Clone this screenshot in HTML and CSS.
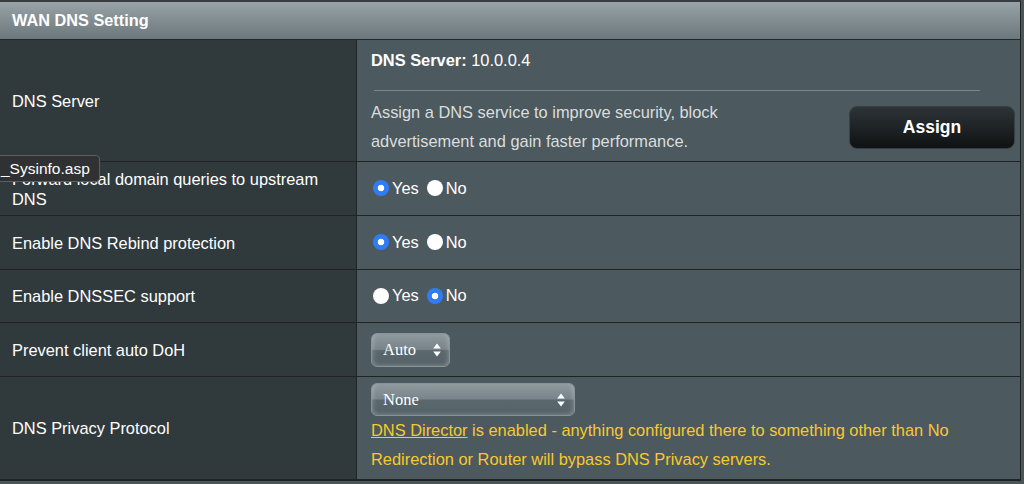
FILE: index.html
```html
<!DOCTYPE html>
<html lang="en">
<head>
<meta charset="utf-8">
<title>WAN DNS Setting</title>
<link rel="stylesheet" href="styles.css">
</head>
<body>
<div class="panel">
  <div class="panel-head">WAN DNS Setting</div>
  <div class="form">
    <div class="label">DNS Server</div>
    <div class="field server">
      <div class="server-line"><b>DNS Server:</b> 10.0.0.4</div>
      <div class="rule"></div>
      <div class="assign">
        <div class="assign-text">Assign a DNS service to improve security, block advertisement and gain faster performance.</div>
        <button class="btn-assign" type="button">Assign</button>
      </div>
    </div>

    <div class="label">Forward local domain queries to upstream DNS</div>
    <div class="field">
      <label class="opt"><input type="radio" name="fwd" checked><span>Yes</span></label>
      <label class="opt"><input type="radio" name="fwd"><span>No</span></label>
    </div>

    <div class="label">Enable DNS Rebind protection</div>
    <div class="field">
      <label class="opt"><input type="radio" name="rebind" checked><span>Yes</span></label>
      <label class="opt"><input type="radio" name="rebind"><span>No</span></label>
    </div>

    <div class="label">Enable DNSSEC support</div>
    <div class="field">
      <label class="opt"><input type="radio" name="dnssec"><span>Yes</span></label>
      <label class="opt"><input type="radio" name="dnssec" checked><span>No</span></label>
    </div>

    <div class="label">Prevent client auto DoH</div>
    <div class="field">
      <span class="sel sel-auto">
        <select><option>Auto</option></select>
        <svg class="arrows" width="8" height="14" viewBox="0 0 8 14"><path d="M4 0.5 L7.8 5.5 H0.2 Z M0.2 8.5 H7.8 L4 13.5 Z" fill="#fff"/></svg>
      </span>
    </div>

    <div class="label">DNS Privacy Protocol</div>
    <div class="field privacy">
      <span class="sel sel-none">
        <select><option>None</option></select>
        <svg class="arrows" width="8" height="14" viewBox="0 0 8 14"><path d="M4 0.5 L7.8 5.5 H0.2 Z M0.2 8.5 H7.8 L4 13.5 Z" fill="#fff"/></svg>
      </span>
      <div class="note"><a href="#">DNS Director</a> is enabled - anything configured there to something other than No Redirection or Router will bypass DNS Privacy servers.</div>
    </div>
  </div>
</div>
<div class="tip">_Sysinfo.asp</div>
</body>
</html>
```

FILE: styles.css
```css
* { box-sizing: border-box; }

html, body { margin: 0; }

body {
  position: relative;
  width: 1024px;
  height: 484px;
  overflow: hidden;
  background: #4b5659;
  color: #fff;
  font-family: "Liberation Sans", Arial, sans-serif;
  font-size: 16.4px;
}

.panel {
  width: 1021px;
  border-top: 2px solid #363c3f;
  border-right: 1px solid #1f2325;
  border-bottom: 2px solid #1f2325;
  background: #1f2325;
}

.panel-head {
  height: 38px;
  display: flex;
  align-items: center;
  padding-left: 12px;
  border-bottom: 1px solid #23282a;
  background: linear-gradient(#97a3a7, #6c777b);
  font-size: 16.3px;
  font-weight: bold;
}

.form {
  display: grid;
  grid-template-columns: 356px 1fr;
  grid-template-rows: 121px 53px 53px 52px 53px 102px;
  gap: 1px;
  background: #1f2325;
}

.label {
  display: flex;
  align-items: center;
  padding: 0 12px;
  background: #303a3d;
  line-height: 20px;
}

.field {
  display: flex;
  align-items: center;
  padding: 0 5px 0 14px;
  background: #4c595e;
}

/* DNS server cell */
.server {
  flex-direction: column;
  align-items: stretch;
  padding-top: 10px;
}

.server-line { line-height: 20px; }

.rule {
  height: 1px;
  margin: 20px 35px 0 3px;
  background: #7a868a;
}

.assign {
  display: flex;
  align-items: center;
  justify-content: space-between;
  margin-top: 7px;
}

.assign-text {
  width: 420px;
  line-height: 29px;
  color: #dadedf;
}

.btn-assign {
  width: 166px;
  height: 43px;
  border: 1px solid #394043;
  border-radius: 8px;
  background: linear-gradient(#2d3437, #0f1213);
  color: #fff;
  font-family: "Liberation Sans", Arial, sans-serif;
  font-size: 17.5px;
  font-weight: bold;
}

/* radios */
.opt {
  display: flex;
  align-items: center;
  margin-top: -1px;
}

.opt + .opt { margin-left: 6px; }

.opt input {
  appearance: none;
  -webkit-appearance: none;
  width: 16px;
  height: 16px;
  margin: 0 3px 0 2px;
  border-radius: 50%;
  background: #fff;
}

.opt input:checked {
  background: radial-gradient(circle, #fff 0 3px, #2f7cf5 3.6px);
}

/* selects */
.sel {
  position: relative;
  display: inline-flex;
}

.sel select {
  appearance: none;
  -webkit-appearance: none;
  height: 34px;
  padding: 0 0 0 11px;
  border: 1px solid #899498;
  border-radius: 6px;
  background: linear-gradient(#8f9a9e 0%, #78848a 48%, #5a676c 52%, #56636a 100%);
  box-shadow: inset 0 -2px 3px rgba(255, 255, 255, 0.12),
              inset 5px 0 4px -3px rgba(255, 255, 255, 0.15),
              inset -5px 0 4px -3px rgba(255, 255, 255, 0.15);
  color: #fff;
  font-family: "Liberation Serif", "Times New Roman", serif;
  font-size: 16.5px;
}

.sel-auto select { width: 79px; }
.sel-none select { width: 204px; height: 33px; }

.arrows {
  position: absolute;
  right: 9px;
  top: 10px;
  pointer-events: none;
}

.sel-none .arrows { right: 10px; }

/* privacy */
.privacy {
  flex-direction: column;
  align-items: flex-start;
  justify-content: center;
}

.note {
  color: #f8c92e;
  line-height: 29px;
}

.note a { color: inherit; }

/* tooltip */
.tip {
  position: absolute;
  left: -5px;
  top: 155px;
  height: 27px;
  padding: 0 9px 0 5px;
  border: 1px solid #5d6062;
  border-radius: 4px;
  background: #2f3133;
  color: #fff;
  font-size: 15.5px;
  line-height: 25px;
}
```
